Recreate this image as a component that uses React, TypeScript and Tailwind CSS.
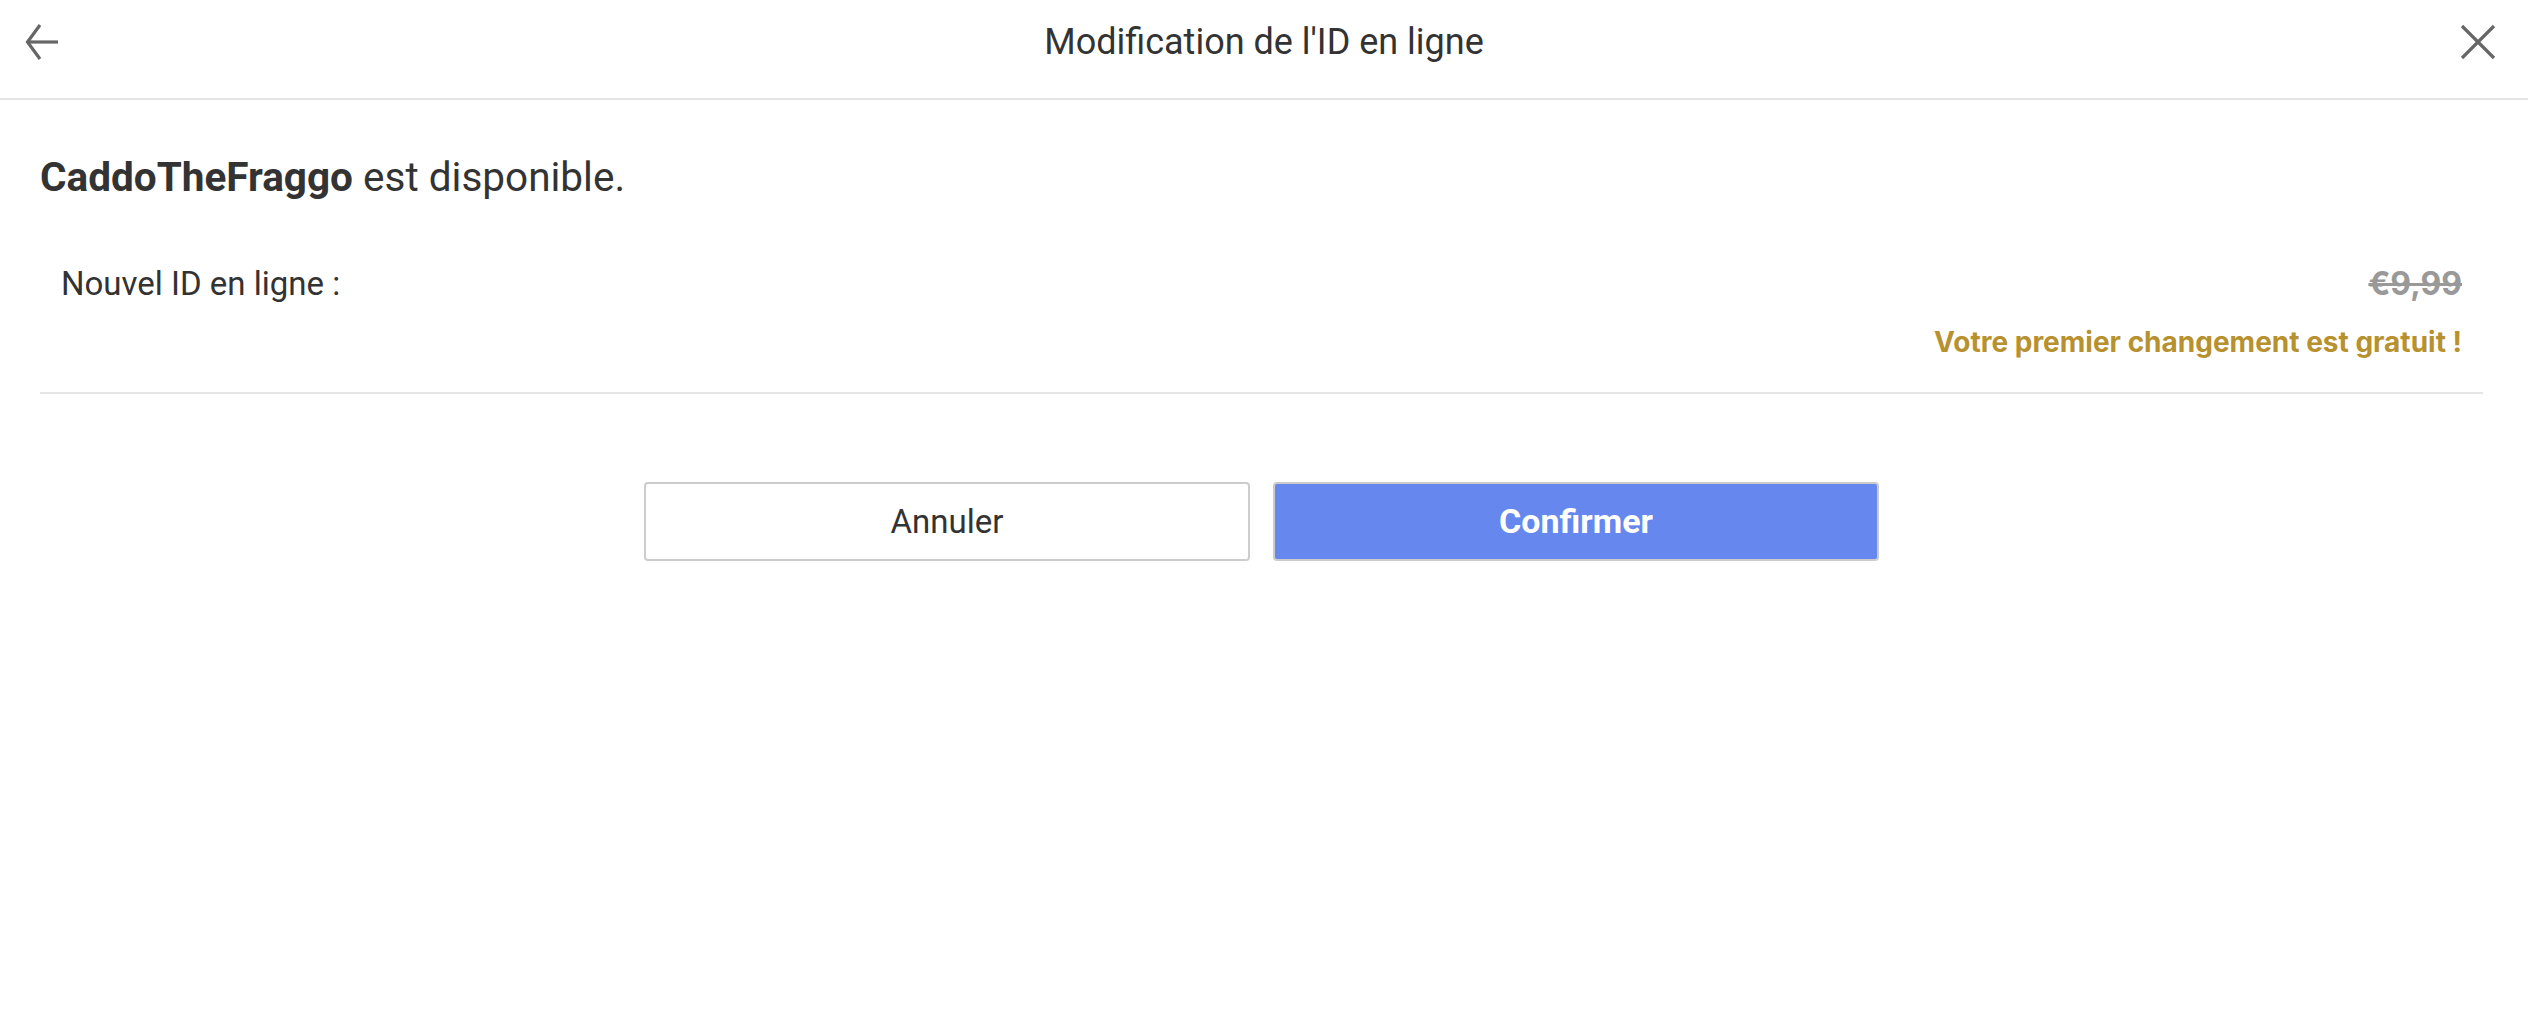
import React from "react";

export default function App() {
  return (
    <div className="w-[2528px] h-[1030px] bg-white text-[#333333]" style={{ fontFamily: "Roboto, 'Liberation Sans', sans-serif" }}>
      <header className="h-[100px] border-b-2 border-[#e6e6e6] flex items-start justify-between pl-[20px] pr-[30px] pt-[22px] relative">
        <button className="w-[44px] h-[40px] flex items-center justify-center text-[#666666]">
          <svg width="40" height="40" viewBox="0 0 40 40" fill="none" stroke="currentColor" strokeWidth="3.2">
            <path d="M36 20H6" />
            <path d="M18 3L5.5 20L18 37" />
          </svg>
        </button>
        <h1 className="absolute top-[20px] left-1/2 -translate-x-1/2 text-[36px] leading-[44px] font-normal text-[#333333] whitespace-nowrap">
          Modification de l'ID en ligne
        </h1>
        <button className="w-[40px] h-[40px] flex items-center justify-center text-[#666666]">
          <svg width="36" height="36" viewBox="0 0 36 36" fill="none" stroke="currentColor" strokeWidth="3.2">
            <path d="M2 2L34 34" />
            <path d="M34 2L2 34" />
          </svg>
        </button>
      </header>
      <main className="pl-[40px] pr-[45px]">
        <p className="mt-[53px] text-[40.5px] leading-[48px]">
          <span className="font-bold">CaddoTheFraggo</span> est disponible.
        </p>
        <div className="mt-[63px] px-[21px] flex items-center justify-between h-[40px]">
          <span className="text-[33px]">Nouvel ID en ligne :</span>
          <span className="text-[32px] font-bold text-[#999999] line-through" style={{ fontFamily: "Inter, sans-serif" }}>€9,99</span>
        </div>
        <div className="mt-[22px] px-[21px] flex justify-end h-[32px] items-center">
          <span className="text-[28px] font-bold text-[#b8912f]" style={{ fontFamily: "Inter, sans-serif" }}>
            Votre premier changement est gratuit !
          </span>
        </div>
        <div className="mt-[34px] h-[2px] bg-[#e6e6e6]" />
        <div className="mt-[88px] flex justify-center gap-[23px]">
          <button className="w-[606px] h-[79px] rounded-[4px] border-2 border-[#cccccc] bg-white text-[33px] text-[#333333]">
            Annuler
          </button>
          <button className="w-[606px] h-[79px] rounded-[4px] border-2 border-[#cccccc] bg-[#6587ee] text-[34px] font-bold text-white">
            Confirmer
          </button>
        </div>
      </main>
    </div>
  );
}
